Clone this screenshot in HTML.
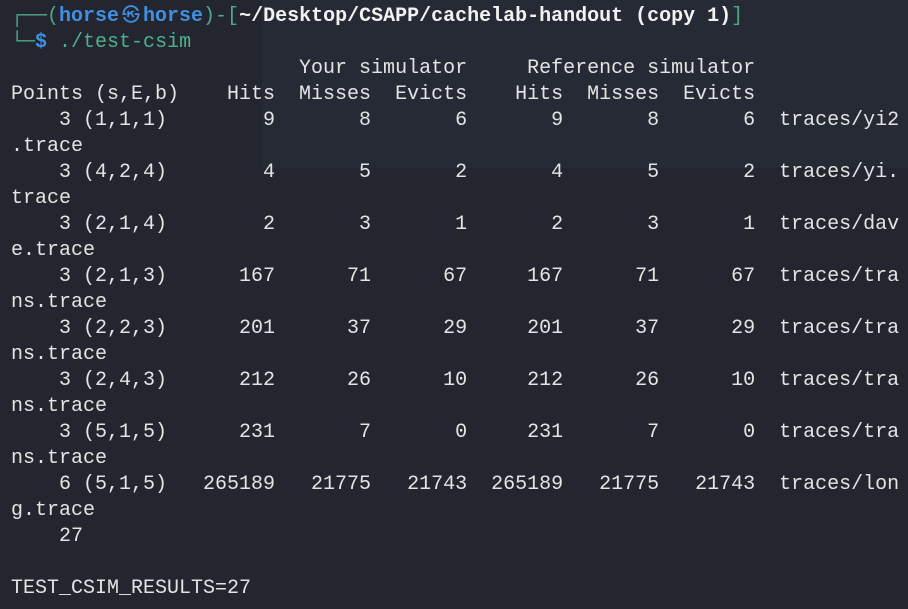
<!DOCTYPE html>
<html><head><meta charset="utf-8"><style>
html,body{margin:0;padding:0;width:908px;height:609px;overflow:hidden;background:#23262e;}
.bg2{position:absolute;left:262px;top:0;width:646px;height:168px;background:#262a34;}
pre{position:absolute;left:11px;top:4px;margin:0;font-family:"Liberation Mono","DejaVu Sans Mono",monospace;font-size:20px;line-height:26px;color:#e4e4e4;white-space:pre;}
.g{color:#4ea88a}.b{color:#3f8fe4;font-weight:bold}.w{color:#f2f2f2;font-weight:bold}.t{color:#4eb08f}
.k{display:inline-block;width:24px;text-align:center;font-family:"Noto Sans CJK JP","DejaVu Sans",sans-serif;font-size:18px;line-height:20px}
</style></head><body><div class="bg2"></div>
<pre><span class="g">┌──(</span><span class="b">horse<span class="k">㉿</span>horse</span><span class="g">)-[</span><span class="w">~/Desktop/CSAPP/cachelab-handout (copy 1)</span><span class="g">]</span>
<span class="g">└─</span><span class="b">$</span> <span class="t">./test-csim</span>
                        Your simulator     Reference simulator
Points (s,E,b)    Hits  Misses  Evicts    Hits  Misses  Evicts
    3 (1,1,1)        9       8       6       9       8       6  traces/yi2
.trace
    3 (4,2,4)        4       5       2       4       5       2  traces/yi.
trace
    3 (2,1,4)        2       3       1       2       3       1  traces/dav
e.trace
    3 (2,1,3)      167      71      67     167      71      67  traces/tra
ns.trace
    3 (2,2,3)      201      37      29     201      37      29  traces/tra
ns.trace
    3 (2,4,3)      212      26      10     212      26      10  traces/tra
ns.trace
    3 (5,1,5)      231       7       0     231       7       0  traces/tra
ns.trace
    6 (5,1,5)   265189   21775   21743  265189   21775   21743  traces/lon
g.trace
    27

TEST_CSIM_RESULTS=27</pre>
</body></html>
